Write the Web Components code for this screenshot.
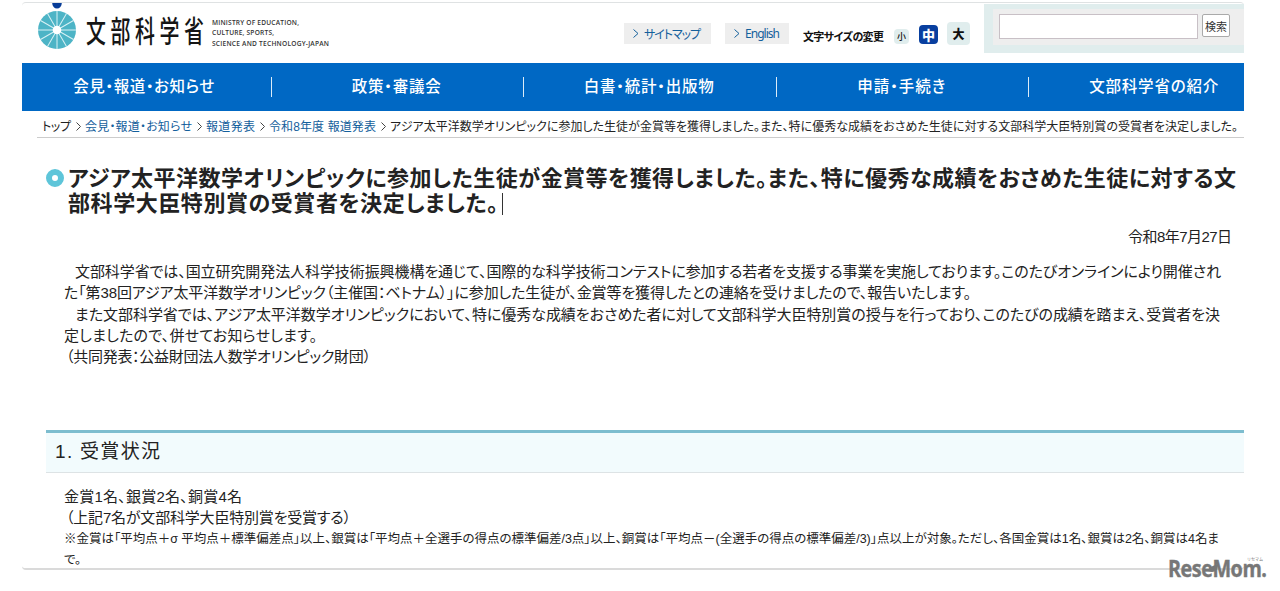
<!DOCTYPE html>
<html lang="ja">
<head>
<meta charset="utf-8">
<title>文部科学省</title>
<style>
    body {
        margin: 0;
        background: #fff;
        color: #222;
        font-family: "Liberation Sans", "Noto Sans CJK JP", sans-serif;
    }
    a {
        color: #14609c;
        text-decoration: none;
    }
</style>
</head>
<body>
<mext-page>
    <mext-header slot="header"></mext-header>
    <mext-nav slot="header">
        <fit-line width="141">会見・報道・お知らせ</fit-line>
        <fit-line width="89">政策・審議会</fit-line>
        <fit-line width="130">白書・統計・出版物</fit-line>
        <fit-line width="88">申請・手続き</fit-line>
        <fit-line width="129">文部科学省の紹介</fit-line>
    </mext-nav>
    <bread-crumb slot="header">
        <fit-line width="29">トップ</fit-line>
        <fit-line width="107"><a>会見・報道・お知らせ</a></fit-line>
        <fit-line width="49"><a>報道発表</a></fit-line>
        <fit-line width="107"><a>令和8年度 報道発表</a></fit-line>
        <fit-line width="848">アジア太平洋数学オリンピックに参加した生徒が金賞等を獲得しました。また、特に優秀な成績をおさめた生徒に対する文部科学大臣特別賞の受賞者を決定しました。</fit-line>
    </bread-crumb>
    <page-title>
        <fit-line width="1168">アジア太平洋数学オリンピックに参加した生徒が金賞等を獲得しました。また、特に優秀な成績をおさめた生徒に対する文</fit-line>
        <fit-line width="430">部科学大臣特別賞の受賞者を決定しました。</fit-line>
    </page-title>
    <text-block style="--top: 10px; --align: flex-end; --right: 12px">
        <fit-line width="104">令和8年7月27日</fit-line>
    </text-block>
    <text-block style="--top: 14px">
        <fit-line width="1146" indent="11">文部科学省では、国立研究開発法人科学技術振興機構を通じて、国際的な科学技術コンテストに参加する若者を支援する事業を実施しております。このたびオンラインにより開催され</fit-line>
        <fit-line width="907">た「第38回アジア太平洋数学オリンピック（主催国：ベトナム）」に参加した生徒が、金賞等を獲得したとの連絡を受けましたので、報告いたします。</fit-line>
        <fit-line width="1145" indent="11">また文部科学省では、アジア太平洋数学オリンピックにおいて、特に優秀な成績をおさめた者に対して文部科学大臣特別賞の授与を行っており、このたびの成績を踏まえ、受賞者を決</fit-line>
        <fit-line width="253">定しましたので、併せてお知らせします。</fit-line>
        <fit-line width="305" indent="2">（共同発表：公益財団法人数学オリンピック財団）</fit-line>
    </text-block>
    <section-heading><fit-line width="105">1. 受賞状況</fit-line></section-heading>
    <text-block style="--top: 13px">
        <fit-line width="178">金賞1名、銀賞2名、銅賞4名</fit-line>
        <fit-line width="285" indent="2">（上記7名が文部科学大臣特別賞を受賞する）</fit-line>
        <fit-line class="note" width="1155">※金賞は「平均点＋σ 平均点＋標準偏差点」以上、銀賞は「平均点＋全選手の得点の標準偏差/3点」以上、銅賞は「平均点－(全選手の得点の標準偏差/3)」点以上が対象。ただし、各国金賞は1名、銀賞は2名、銅賞は4名ま</fit-line>
        <fit-line class="note" width="17">で。</fit-line>
    </text-block>
</mext-page>
<rese-mom></rese-mom>

<script>
const template = (html) => {
    const element = document.createElement('template');
    element.innerHTML = html;
    return element;
};

class BaseElement extends HTMLElement {
    connectedCallback() {
        if (this.shadowRoot) return;
        const shadowRoot = this.attachShadow({mode: 'open'});
        shadowRoot.appendChild(this.constructor.template.content.cloneNode(true));
    }
}

// One line of text, tracked so that it fills the given width
class FitLine extends BaseElement {
    static template = template(`
        <style>
            :host {
                display: block;
                white-space: nowrap;
                font-feature-settings: "palt";
            }
            :host(.note) {
                font-size: 12.5px;
            }
            span {
                display: inline-block;
            }
        </style>
        <span><slot></slot></span>
    `);

    connectedCallback() {
        super.connectedCallback();
        this.style.paddingLeft = `${this.getAttribute('indent') || 0}px`;
        this.fit();
    }

    fit() {
        const span = this.shadowRoot.querySelector('span');
        span.style.letterSpacing = 'normal';
        span.style.marginRight = '0';
        const natural = span.getBoundingClientRect().width;
        const scale = natural / (span.offsetWidth || 1) || 1;
        const spacing = (this.getAttribute('width') - natural) / (this.textContent.length - 1) / scale;
        span.style.letterSpacing = `${spacing}px`;
        span.style.marginRight = `${-spacing}px`;
    }
}

class MextPage extends BaseElement {
    static template = template(`
        <style>
            :host {
                display: block;
                box-sizing: border-box;
                width: 1222px;
                height: 568px;
                margin: 2px 0 0 22px;
                border-top: 1px solid #dfe2e3;
                border-bottom: 2px solid #dadada;
                border-radius: 4px;
            }
            main {
                padding-left: 24px;
            }
        </style>
        <slot name="header"></slot>
        <main><slot></slot></main>
    `);
}

class MextLogo extends BaseElement {
    static template = template(`
        <style>
            :host {
                display: flex;
                height: 60px;
            }
            svg {
                display: block;
                width: 40px;
                height: 50px;
                margin-left: 15px;
            }
            .name {
                width: 119px;
                margin: 6px 0 0 9px;
                color: #151515;
                font-weight: 500;
                line-height: 46px;
            }
            .name fit-line {
                font-size: 24px;
                transform: scale(.83, 1.22);
                transform-origin: left;
            }
            .english {
                margin: 15px 0 0 7px;
                color: #333;
                font: 600 6.6px/10.4px "Open Sans", sans-serif;
            }
        </style>
        <svg viewBox="0 0 40 50">
            <ellipse cx="20" cy="0" rx="4.8" ry="5.6" fill="#083c98"/>
            <circle cx="20" cy="27" r="19" fill="#4db4c6"/>
            <g id="spokes" stroke="#d9f1f5" stroke-width="1"></g>
            <circle cx="20" cy="27" r="4.3" fill="#fff"/>
        </svg>
        <div class="name"><fit-line width="118">文部科学省</fit-line></div>
        <div class="english">
            <fit-line width="87">MINISTRY OF EDUCATION,</fit-line>
            <fit-line width="62">CULTURE, SPORTS,</fit-line>
            <fit-line width="117">SCIENCE AND TECHNOLOGY-JAPAN</fit-line>
        </div>
    `);

    connectedCallback() {
        super.connectedCallback();
        let lines = '';
        for (let angle = 0; angle < 360; angle += 30) {
            lines += `<line x1="20" y1="27" x2="20" y2="8" transform="rotate(${angle} 20 27)"/>`;
        }
        this.shadowRoot.querySelector('#spokes').innerHTML = lines;
    }
}

class LinkButton extends BaseElement {
    static template = template(`
        <style>
            :host {
                display: flex;
                align-items: center;
                box-sizing: border-box;
                height: 21px;
                padding-left: 9px;
                background: #eee;
                color: #14609c;
                font-size: 12px;
            }
            svg {
                width: 6px;
                height: 9px;
                margin-right: 5px;
            }
        </style>
        <svg viewBox="0 0 6 9" fill="none" stroke="#14609c"><path d="M.5.5 5 4.5.5 8.5"/></svg>
        <slot></slot>
    `);
}

class SizeSwitch extends BaseElement {
    static template = template(`
        <style>
            :host {
                display: flex;
                align-items: center;
                color: #111;
                font-weight: bold;
            }
            .label {
                margin: 5px 10px 0 0;
                font-size: 11px;
            }
            b {
                display: flex;
                align-items: center;
                justify-content: center;
                border-radius: 4px;
                background: #e0eded;
            }
            .small {
                width: 15px;
                height: 15px;
                margin-top: 5px;
                font-size: 9px;
                font-weight: 500;
            }
            .middle {
                width: 19px;
                height: 19px;
                margin: 2px 9px 0 10px;
                background: #083f9f;
                color: #fff;
                font-size: 13px;
            }
            .large {
                width: 23px;
                height: 23px;
                font-size: 12px;
            }
        </style>
        <fit-line class="label" width="81">文字サイズの変更</fit-line>
        <b class="small">小</b><b class="middle">中</b><b class="large">大</b>
    `);
}

class SearchBox extends BaseElement {
    static template = template(`
        <style>
            :host {
                display: block;
                box-sizing: border-box;
                width: 260px;
                height: 49px;
                padding: 5px 0 0 9px;
                background: #e0eded;
            }
            form {
                display: flex;
                gap: 4px;
                box-sizing: border-box;
                height: 36px;
                padding: 5px 0 0 6px;
                background: #eee;
            }
            input, button {
                box-sizing: border-box;
                padding: 0;
                border: 1px solid #c8c0c6;
                background: #fff;
            }
            input {
                width: 199px;
                height: 25px;
            }
            button {
                width: 28px;
                height: 23px;
                border-color: #aaa;
                border-radius: 2px;
                color: #333;
                font: 11px/23px "Noto Sans CJK JP", sans-serif;
            }
        </style>
        <form><input type="text"><button type="button">検索</button></form>
    `);
}

class MextHeader extends BaseElement {
    static template = template(`
        <style>
            :host {
                display: flex;
                height: 60px;
            }
            mext-logo {
                width: 602px;
            }
            .sitemap {
                width: 87px;
                margin: 20px 14px 0 0;
            }
            .english {
                width: 64px;
                margin: 20px 14px 0 0;
                font-family: "Noto Sans", sans-serif;
            }
            size-switch {
                height: 23px;
                margin-top: 19px;
                width: 167px;
            }
            search-box {
                margin: 1px 0 0 auto;
            }
        </style>
        <mext-logo></mext-logo>
        <link-button class="sitemap"><fit-line width="57">サイトマップ</fit-line></link-button>
        <link-button class="english"><fit-line width="35">English</fit-line></link-button>
        <size-switch></size-switch>
        <search-box></search-box>
    `);
}

class MextNav extends BaseElement {
    static template = template(`
        <style>
            :host {
                display: block;
                height: 48px;
                overflow: hidden;
                background: #0068c4;
                color: #fff;
                font-size: 15.5px;
                font-weight: 500;
            }
            nav {
                display: grid;
                grid-template-columns: repeat(5, 252.5px);
                align-items: center;
                height: 47px;
                margin-left: -3px;
            }
            ::slotted(*) {
                display: flex;
                align-items: center;
                justify-content: center;
                box-sizing: border-box;
                height: 20px;
                padding: 0 2px 3px 0;
                border-right: 1px solid #dcecf8;
            }
        </style>
        <nav><slot></slot></nav>
    `);
}

class BreadCrumb extends BaseElement {
    static template = template(`
        <style>
            :host {
                display: flex;
                align-items: center;
                box-sizing: border-box;
                height: 27px;
                margin-left: 15px;
                padding: 5px 0 0 5px;
                border-bottom: 1px solid #ccc;
                font-size: 12px;
                line-height: 20px;
            }
            svg {
                flex: none;
                width: 5px;
                height: 9px;
                margin: 0 4px 0 5px;
            }
        </style>
    `);

    connectedCallback() {
        super.connectedCallback();
        const arrow = '<svg viewBox="0 0 5 9" fill="none" stroke="#444"><path d="M.5.5 4.5 4.5.5 8.5"/></svg>';
        [...this.children].forEach((item, index) => {
            item.slot = `item${index}`;
            this.shadowRoot.append(template(`${index ? arrow : ''}<slot name="item${index}"></slot>`).content);
        });
    }
}

class PageTitle extends BaseElement {
    static template = template(`
        <style>
            :host {
                display: flex;
                height: 49px;
                margin-top: 29px;
                font-size: 22px;
                line-height: 24.5px;
                font-weight: 700;
            }
            i {
                flex: none;
                box-sizing: border-box;
                width: 18px;
                height: 18px;
                margin: 2px 4px 0 0;
                border: 6px solid #5ec5d9;
                border-radius: 50%;
            }
            .lines {
                position: relative;
            }
            .caret {
                position: absolute;
                left: 434px;
                top: 26px;
                width: 1px;
                height: 22px;
                background: #333;
            }
        </style>
        <i></i>
        <div class="lines"><slot></slot><span class="caret"></span></div>
    `);
}

class TextBlock extends BaseElement {
    static template = template(`
        <style>
            :host {
                display: flex;
                flex-direction: column;
                align-items: var(--align, flex-start);
                padding: var(--top, 0) var(--right, 0) 0 18px;
                font-size: 15px;
                line-height: 21.2px;
            }
        </style>
        <slot></slot>
    `);
}

class SectionHeading extends BaseElement {
    static template = template(`
        <style>
            :host {
                display: block;
                box-sizing: border-box;
                height: 43px;
                margin-top: 63px;
                padding-left: 9px;
                border-top: 3px solid #7dbdcf;
                border-bottom: 1px solid #dde3e5;
                background: #f2fbfd;
                font-size: 19px;
                line-height: 37px;
            }
        </style>
        <slot></slot>
    `);
}

// Watermark over the lower right corner of the page
class ReseMom extends BaseElement {
    static template = template(`
        <style>
            :host {
                position: absolute;
                left: 1168px;
                top: 556px;
                color: #777;
                font: bold 23px/25px "Open Sans", sans-serif;
            }
            .word {
                display: block;
                transform: scaleX(.86);
                transform-origin: left;
                -webkit-text-stroke: .4px #777;
            }
            .ruby {
                position: absolute;
                left: 79px;
                top: 1px;
                font: 4px/5px "Noto Sans CJK JP", sans-serif;
            }
            svg {
                position: absolute;
                left: 38px;
                top: 7px;
                width: 14px;
                height: 14px;
            }
        </style>
        <fit-line class="word" width="99">ReseMom.</fit-line>
        <svg viewBox="0 0 14 14"><path d="M2 8C3 3 8 3 12 1c0 5-2 8-6 8z" fill="#777"/></svg>
        <span class="ruby">リセマム</span>
    `);
}

customElements.define('mext-logo', MextLogo);
customElements.define('link-button', LinkButton);
customElements.define('size-switch', SizeSwitch);
customElements.define('search-box', SearchBox);
customElements.define('mext-header', MextHeader);
customElements.define('mext-nav', MextNav);
customElements.define('bread-crumb', BreadCrumb);
customElements.define('page-title', PageTitle);
customElements.define('text-block', TextBlock);
customElements.define('section-heading', SectionHeading);
customElements.define('rese-mom', ReseMom);
customElements.define('mext-page', MextPage);
// Last, so that the lines are measured with their parents' styles
customElements.define('fit-line', FitLine);
</script>
</body>
</html>
